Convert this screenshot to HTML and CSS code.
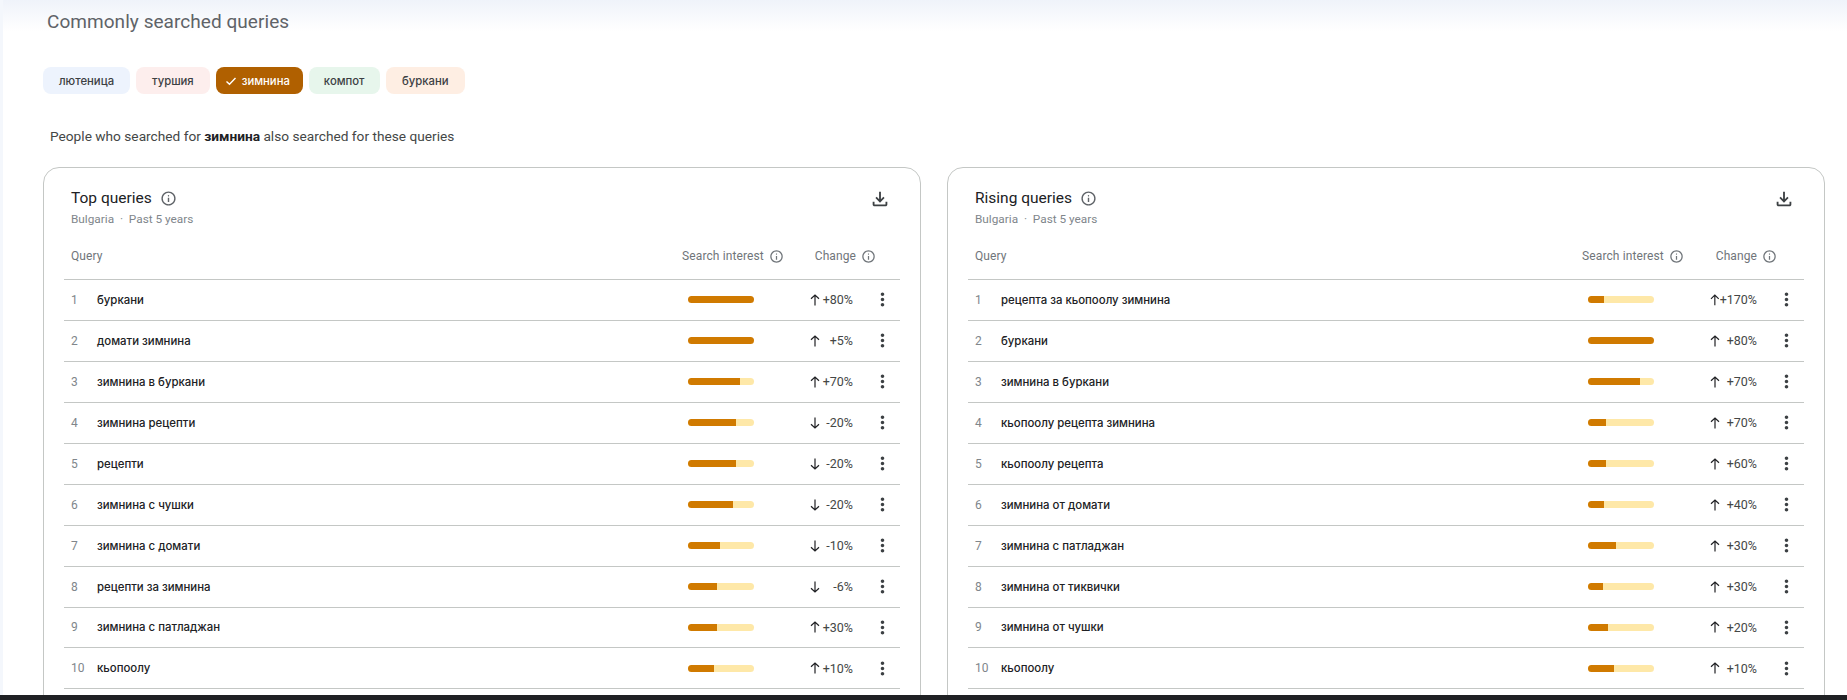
FILE: index.html
```html
<!DOCTYPE html>
<html lang="en">
<head>
  <meta charset="UTF-8">
  <title>Commonly searched queries</title>
  <link rel="stylesheet" href="styles.css">
</head>
<body>
  <svg class="sprite" xmlns="http://www.w3.org/2000/svg">
    <symbol id="i-info" viewBox="0 0 24 24"><path d="M11 17h2v-6h-2v6zm1-8q.425 0 .713-.288T13 8q0-.425-.287-.713T12 7q-.425 0-.713.287T11 8q0 .425.287.713T12 9zm0 13q-2.075 0-3.9-.788t-3.175-2.137q-1.35-1.35-2.137-3.175T2 12q0-2.075.788-3.9t2.137-3.175q1.35-1.35 3.175-2.137T12 2q2.075 0 3.9.788t3.175 2.137q1.35 1.35 2.138 3.175T22 12q0 2.075-.787 3.9t-2.138 3.175q-1.35 1.35-3.175 2.138T12 22zm0-2q3.35 0 5.675-2.325T20 12q0-3.35-2.325-5.675T12 4Q8.65 4 6.325 6.325T4 12q0 3.35 2.325 5.675T12 20z"/></symbol>
    <symbol id="i-download" viewBox="0 0 24 24"><path d="M12 16l-5-5 1.4-1.45 2.6 2.6V4h2v8.15l2.6-2.6L17 11l-5 5zM6 20q-.825 0-1.413-.588T4 18v-3h2v3h12v-3h2v3q0 .825-.587 1.413T18 20H6z"/></symbol>
    <symbol id="i-more" viewBox="0 0 24 24"><path d="M12 8c1.1 0 2-.9 2-2s-.9-2-2-2-2 .9-2 2 .9 2 2 2zm0 2c-1.1 0-2 .9-2 2s.9 2 2 2 2-.9 2-2-.9-2-2-2zm0 6c-1.1 0-2 .9-2 2s.9 2 2 2 2-.9 2-2-.9-2-2-2z"/></symbol>
    <symbol id="i-up" viewBox="0 0 10 12"><path d="M5 11.5V1M1 4.8 5 1l4 3.8" fill="none" stroke="currentColor" stroke-width="1.2"/></symbol>
    <symbol id="i-down" viewBox="0 0 10 12"><path d="M5 .5V11M1 7.2 5 11l4-3.8" fill="none" stroke="currentColor" stroke-width="1.2"/></symbol>
  </svg>

  <main class="page">
    <h1 class="page-title">Commonly searched queries</h1>

    <div class="chips">
      <span class="chip chip-blue">лютеница</span>
      <span class="chip chip-red">туршия</span>
      <span class="chip chip-selected">
        <svg class="chip-check" viewBox="0 0 12 12"><path d="M1.5 6.4 4.5 9.2 10.5 3" fill="none" stroke="currentColor" stroke-width="1.4"/></svg>
        зимнина
      </span>
      <span class="chip chip-green">компот</span>
      <span class="chip chip-orange">буркани</span>
    </div>

    <p class="intro">People who searched for <b>зимнина</b> also searched for these queries</p>

    <div class="cards">
      <section class="card card-top">
        <div class="card-head">
          <div>
            <h2 class="card-title">Top queries <svg class="icon-info"><use href="#i-info"/></svg></h2>
            <div class="card-sub">Bulgaria &nbsp;·&nbsp; Past 5 years</div>
          </div>
          <svg class="icon-download"><use href="#i-download"/></svg>
        </div>

        <div class="table-head">
          <span class="th-query">Query</span>
          <span class="th-interest">Search interest <svg class="icon-info-small"><use href="#i-info"/></svg></span>
          <span class="th-change">Change <svg class="icon-info-small"><use href="#i-info"/></svg></span>
        </div>

        <div class="row"><span class="num">1</span><span class="name">буркани</span><span class="bar"><i style="width:100%"></i></span><span class="change"><svg class="arrow"><use href="#i-up"/></svg>+80%</span><svg class="more"><use href="#i-more"/></svg></div>
        <div class="row"><span class="num">2</span><span class="name">домати зимнина</span><span class="bar"><i style="width:100%"></i></span><span class="change"><svg class="arrow"><use href="#i-up"/></svg>+5%</span><svg class="more"><use href="#i-more"/></svg></div>
        <div class="row"><span class="num">3</span><span class="name">зимнина в буркани</span><span class="bar"><i style="width:79%"></i></span><span class="change"><svg class="arrow"><use href="#i-up"/></svg>+70%</span><svg class="more"><use href="#i-more"/></svg></div>
        <div class="row"><span class="num">4</span><span class="name">зимнина рецепти</span><span class="bar"><i style="width:73%"></i></span><span class="change"><svg class="arrow"><use href="#i-down"/></svg>-20%</span><svg class="more"><use href="#i-more"/></svg></div>
        <div class="row"><span class="num">5</span><span class="name">рецепти</span><span class="bar"><i style="width:73%"></i></span><span class="change"><svg class="arrow"><use href="#i-down"/></svg>-20%</span><svg class="more"><use href="#i-more"/></svg></div>
        <div class="row"><span class="num">6</span><span class="name">зимнина с чушки</span><span class="bar"><i style="width:68%"></i></span><span class="change"><svg class="arrow"><use href="#i-down"/></svg>-20%</span><svg class="more"><use href="#i-more"/></svg></div>
        <div class="row"><span class="num">7</span><span class="name">зимнина с домати</span><span class="bar"><i style="width:48%"></i></span><span class="change"><svg class="arrow"><use href="#i-down"/></svg>-10%</span><svg class="more"><use href="#i-more"/></svg></div>
        <div class="row"><span class="num">8</span><span class="name">рецепти за зимнина</span><span class="bar"><i style="width:44%"></i></span><span class="change"><svg class="arrow"><use href="#i-down"/></svg>-6%</span><svg class="more"><use href="#i-more"/></svg></div>
        <div class="row"><span class="num">9</span><span class="name">зимнина с патладжан</span><span class="bar"><i style="width:44%"></i></span><span class="change"><svg class="arrow"><use href="#i-up"/></svg>+30%</span><svg class="more"><use href="#i-more"/></svg></div>
        <div class="row"><span class="num">10</span><span class="name">кьопоолу</span><span class="bar"><i style="width:39%"></i></span><span class="change"><svg class="arrow"><use href="#i-up"/></svg>+10%</span><svg class="more"><use href="#i-more"/></svg></div>
      </section>

      <section class="card card-rising">
        <div class="card-head">
          <div>
            <h2 class="card-title">Rising queries <svg class="icon-info"><use href="#i-info"/></svg></h2>
            <div class="card-sub">Bulgaria &nbsp;·&nbsp; Past 5 years</div>
          </div>
          <svg class="icon-download"><use href="#i-download"/></svg>
        </div>

        <div class="table-head">
          <span class="th-query">Query</span>
          <span class="th-interest">Search interest <svg class="icon-info-small"><use href="#i-info"/></svg></span>
          <span class="th-change">Change <svg class="icon-info-small"><use href="#i-info"/></svg></span>
        </div>

        <div class="row"><span class="num">1</span><span class="name">рецепта за кьопоолу зимнина</span><span class="bar"><i style="width:24%"></i></span><span class="change"><svg class="arrow"><use href="#i-up"/></svg>+170%</span><svg class="more"><use href="#i-more"/></svg></div>
        <div class="row"><span class="num">2</span><span class="name">буркани</span><span class="bar"><i style="width:100%"></i></span><span class="change"><svg class="arrow"><use href="#i-up"/></svg>+80%</span><svg class="more"><use href="#i-more"/></svg></div>
        <div class="row"><span class="num">3</span><span class="name">зимнина в буркани</span><span class="bar"><i style="width:79%"></i></span><span class="change"><svg class="arrow"><use href="#i-up"/></svg>+70%</span><svg class="more"><use href="#i-more"/></svg></div>
        <div class="row"><span class="num">4</span><span class="name">кьопоолу рецепта зимнина</span><span class="bar"><i style="width:28%"></i></span><span class="change"><svg class="arrow"><use href="#i-up"/></svg>+70%</span><svg class="more"><use href="#i-more"/></svg></div>
        <div class="row"><span class="num">5</span><span class="name">кьопоолу рецепта</span><span class="bar"><i style="width:27%"></i></span><span class="change"><svg class="arrow"><use href="#i-up"/></svg>+60%</span><svg class="more"><use href="#i-more"/></svg></div>
        <div class="row"><span class="num">6</span><span class="name">зимнина от домати</span><span class="bar"><i style="width:24%"></i></span><span class="change"><svg class="arrow"><use href="#i-up"/></svg>+40%</span><svg class="more"><use href="#i-more"/></svg></div>
        <div class="row"><span class="num">7</span><span class="name">зимнина с патладжан</span><span class="bar"><i style="width:43%"></i></span><span class="change"><svg class="arrow"><use href="#i-up"/></svg>+30%</span><svg class="more"><use href="#i-more"/></svg></div>
        <div class="row"><span class="num">8</span><span class="name">зимнина от тиквички</span><span class="bar"><i style="width:22%"></i></span><span class="change"><svg class="arrow"><use href="#i-up"/></svg>+30%</span><svg class="more"><use href="#i-more"/></svg></div>
        <div class="row"><span class="num">9</span><span class="name">зимнина от чушки</span><span class="bar"><i style="width:30%"></i></span><span class="change"><svg class="arrow"><use href="#i-up"/></svg>+20%</span><svg class="more"><use href="#i-more"/></svg></div>
        <div class="row"><span class="num">10</span><span class="name">кьопоолу</span><span class="bar"><i style="width:39%"></i></span><span class="change"><svg class="arrow"><use href="#i-up"/></svg>+10%</span><svg class="more"><use href="#i-more"/></svg></div>
      </section>
    </div>
  </main>
  <div class="taskbar"></div>
</body>
</html>
```

FILE: styles.css
```css
html, body {
  margin: 0;
  height: 700px;
  overflow: hidden;
}
body {
  display: flex;
  flex-direction: column;
  font-family: Roboto, "Noto Sans", Arial, sans-serif;
  color: #202124;
  background-color: #fff;
}
.sprite {
  display: none;
}
.page {
  flex: 1;
  min-height: 0;
  overflow: hidden;
  padding: 0 22px 0 43px;
  background: linear-gradient(to bottom, #eff3fa 0, #fff 32px) no-repeat,
    #fff;
  box-shadow: inset 3px 0 0 #f4f7fc;
}
.taskbar {
  height: 5px;
  background-color: #202124;
}
.page-title {
  margin: 0;
  padding: 11px 0 0 4px;
  font-size: 19px;
  line-height: 22px;
  font-weight: 400;
  letter-spacing: .05px;
  color: #5f6368;
}
.chips {
  display: flex;
  gap: 6px;
  margin-top: 34px;
}
.chip {
  display: flex;
  align-items: center;
  justify-content: center;
  gap: 5px;
  box-sizing: border-box;
  height: 27px;
  padding: 0 16px;
  border-radius: 8px;
  font-family: Inter, Roboto, sans-serif;
  font-size: 11.3px;
  font-weight: 500;
  color: #3c4043;
}
.chip-blue { background-color: #edf3fd; }
.chip-red { background-color: #fdeeed; }
.chip-green {
  padding: 0 15px;
  background-color: #e7f6ec;
}
.chip-orange {
  padding: 0 16.5px;
  background-color: #feeee3;
}
.chip-selected {
  padding: 0 13px 0 9px;
  background-color: #b06000;
  color: #fff;
}
.chip-check {
  width: 12px;
  height: 12px;
}
.intro {
  margin: 32px 0 0 7px;
  font-size: 13.7px;
  line-height: 20px;
  color: #444746;
}
.intro b {
  color: #202124;
}
.cards {
  display: flex;
  gap: 26px;
  margin-top: 21px;
}
.card {
  --change-width: 43px;
  --th-change-gap: 31px;
  --th-end: 24px;
  flex: 0 0 878px;
  box-sizing: border-box;
  padding: 0 20px;
  height: 600px;
  border: 1px solid #c4c7c5;
  border-radius: 16px;
}
.card-rising {
  --change-width: 47px;
  --th-change-gap: 32px;
  --th-end: 27px;
}
.card-head {
  display: flex;
  justify-content: space-between;
  padding: 20px 0 0 7px;
}
.card-title {
  display: flex;
  align-items: center;
  gap: 8px;
  margin: 0;
  font-size: 15.5px;
  line-height: 20px;
  font-weight: 400;
  color: #202124;
}
.icon-info {
  width: 17px;
  height: 17px;
  fill: #5f6368;
}
.card-sub {
  margin-top: 3px;
  font-size: 11.8px;
  line-height: 16px;
  color: #80868b;
}
.icon-download {
  width: 22px;
  height: 22px;
  margin: 0 9px 0 0;
  fill: #3c4043;
}
.table-head {
  display: flex;
  align-items: center;
  height: 46px;
  margin-top: 6px;
  padding: 0 var(--th-end) 0 7px;
  border-bottom: 1px solid #c4c7c5;
  font-size: 12px;
  letter-spacing: .1px;
  color: #70757a;
}
.th-query {
  flex: 1;
}
.th-interest, .th-change {
  display: flex;
  align-items: center;
  gap: 5px;
}
.th-change {
  margin-left: var(--th-change-gap);
}
.icon-info-small {
  width: 15px;
  height: 15px;
  fill: #70757a;
}
.row {
  display: flex;
  align-items: center;
  height: 39.95px;
  padding: 0 11px 0 7px;
  border-bottom: 1px solid #c4c7c5;
  font-size: 12.5px;
}
.num {
  width: 26px;
  font-size: 12px;
  color: #80868b;
}
.name {
  flex: 1;
  font-family: Inter, Roboto, sans-serif;
  font-size: 11.4px;
  font-weight: 500;
  color: #202124;
}
.bar {
  width: 66px;
  height: 7px;
  margin-right: 56px;
  border-radius: 4px;
  overflow: hidden;
  background-color: #fee8a8;
}
.bar i {
  display: block;
  height: 100%;
  background-color: #d07a00;
}
.change {
  display: flex;
  justify-content: space-between;
  align-items: center;
  width: var(--change-width);
  color: #444746;
}
.arrow {
  width: 10px;
  height: 12px;
  color: #202124;
}
.more {
  width: 21px;
  height: 21px;
  margin: 0 -4px 0 19px;
  fill: #3c4043;
}
```
